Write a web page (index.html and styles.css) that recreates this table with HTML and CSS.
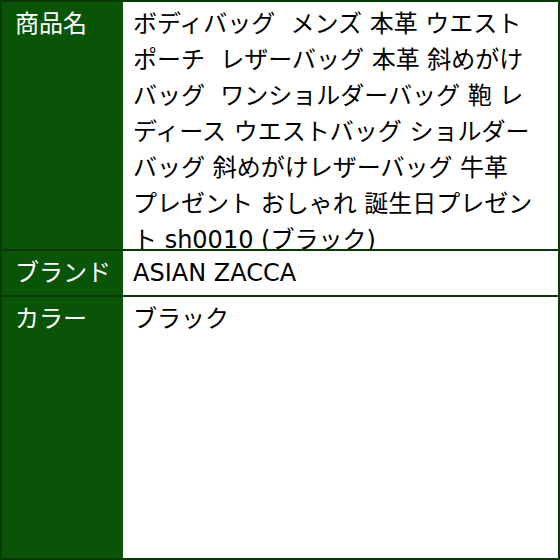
FILE: index.html
```html
<!DOCTYPE html>
<html lang="ja">
<head>
<meta charset="utf-8">
<link rel="stylesheet" href="styles.css">
</head>
<body>
<div class="spec">
  <div class="row row-name">
    <div class="label">商品名</div>
    <div class="value">ボディバッグ&nbsp; メンズ 本革 ウエスト<br>ポーチ&nbsp; レザーバッグ 本革 斜めがけ<br>バッグ&nbsp; ワンショルダーバッグ 鞄 レ<br>ディース ウエストバッグ ショルダー<br>バッグ 斜めがけレザーバッグ 牛革<br>プレゼント おしゃれ 誕生日プレゼン<br>ト sh0010 (ブラック)</div>
  </div>
  <div class="row row-brand">
    <div class="label">ブランド</div>
    <div class="value">ASIAN ZACCA</div>
  </div>
  <div class="row row-color">
    <div class="label">カラー</div>
    <div class="value">ブラック</div>
  </div>
</div>
</body>
</html>
```
FILE: styles.css
```css
html, body {
  margin: 0;
  padding: 0;
  background: #ffffff;
}
.spec {
  width: 560px;
  height: 560px;
  box-sizing: border-box;
  border: 2px solid #083a06;
  display: flex;
  flex-direction: column;
  font-family: "DejaVu Sans", "Noto Sans CJK JP", sans-serif;
  font-size: 24px;
  line-height: 36px;
}
.row {
  display: grid;
  grid-template-columns: 119px 1fr;
  overflow: hidden;
}
.row + .row {
  border-top: 2px solid #083a06;
}
.row-name { height: 247px; }
.row-brand { height: 44px; }
.row-color { flex: 1; }
.label {
  background: #0a5408;
  color: #ffffff;
  padding: 4px 0 0 13px;
  white-space: nowrap;
}
.value {
  background: #ffffff;
  color: #000000;
  margin-left: 2px;
  padding: 4px 0 0 10px;
  white-space: nowrap;
  overflow: hidden;
}
.row .label + .value {
  box-shadow: -2px 0 0 #0a5408;
}
```
